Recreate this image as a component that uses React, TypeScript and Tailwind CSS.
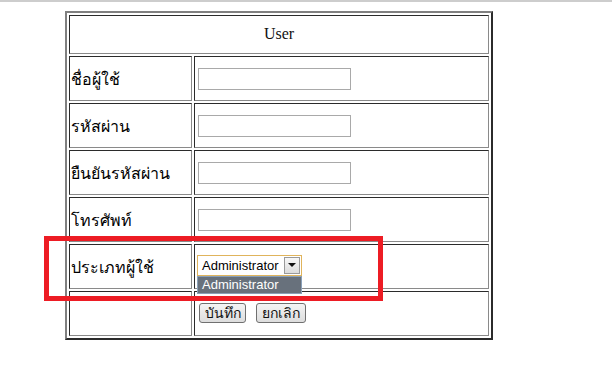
import React from 'react';

const thai = "font-['Tahoma','Noto_Sans','DejaVu_Sans',sans-serif]";

const Cell: React.FC<{ className?: string; children?: React.ReactNode }> = ({ className = '', children }) => (
  <div
    className={`border border-t-[#2b2b2b] border-l-[#2b2b2b] border-b-[#8a8a8a] border-r-[#8a8a8a] flex items-center ${className}`}
  >
    {children}
  </div>
);

const TextBox: React.FC = () => (
  <div className="ml-[3px] w-[153px] h-[22px] border border-[#a9a9a9] bg-white" />
);

const App: React.FC = () => {
  const rows = ['ชื่อผู้ใช้', 'รหัสผ่าน', 'ยืนยันรหัสผ่าน', 'โทรศัพท์'];

  return (
    <div className="relative w-[612px] h-[388px] bg-white overflow-hidden border-t-2 border-[#cdcdcd]">
      <div className="ml-[65px] mt-[9px] w-[428px] border-2 border-t-[#808080] border-l-[#808080] border-b-[#2b2b2b] border-r-[#2b2b2b] p-[2px] grid grid-cols-[123px_295px] grid-rows-[39px_repeat(6,45px)] gap-[2px]">
        <Cell className="col-span-2 justify-center">
          <span className="font-['Liberation_Serif',serif] text-[16px] text-[#111] pb-[1px]">User</span>
        </Cell>
        {rows.map((label) => (
          <React.Fragment key={label}>
            <Cell className="pl-[1px]">
              <span className={`${thai} text-[16px] text-black`}>{label}</span>
            </Cell>
            <Cell>
              <TextBox />
            </Cell>
          </React.Fragment>
        ))}
        <Cell className="pl-[1px]">
          <span className={`${thai} text-[16px] text-black`}>ประเภทผู้ใช้</span>
        </Cell>
        <Cell>
          <div className="relative ml-[2px] mb-[3px]">
            <div className="w-[105px] h-[21px] border border-[#e0b45c] bg-white flex items-center justify-between pl-[4px] pr-[1px]">
              <span className="font-['Liberation_Sans',sans-serif] text-[13px] text-black leading-none">Administrator</span>
              <span className="w-[16px] h-[17px] border border-[#9a9a9a] bg-gradient-to-b from-[#f8f8f8] to-[#dcdcdc] flex items-center justify-center">
                <svg width="8" height="4" viewBox="0 0 8 4">
                  <path d="M0 0h8L4 4z" fill="#111" />
                </svg>
              </span>
            </div>
            <div className="absolute left-0 top-[21px] w-[105px] h-[18px] bg-[#68717c] border border-[#8aa0b8] flex items-center pl-[4px]">
              <span className="font-['Liberation_Sans',sans-serif] text-[13px] text-white leading-none">Administrator</span>
            </div>
          </div>
        </Cell>
        <Cell />
        <Cell>
          <div className="ml-[4px] mt-[-1px] flex gap-[10px]">
            <button className={`${thai} w-[47px] h-[20px] rounded-[3px] border border-[#707070] bg-gradient-to-b from-[#f4f4f4] to-[#dddddd] text-[14px] text-[#111] leading-none`}>
              บันทึก
            </button>
            <button className={`${thai} w-[50px] h-[20px] rounded-[3px] border border-[#707070] bg-gradient-to-b from-[#f4f4f4] to-[#dddddd] text-[14px] text-[#111] leading-none`}>
              ยกเลิก
            </button>
          </div>
        </Cell>
      </div>
      <div className="absolute left-[44px] top-[234px] w-[339px] h-[65px] border-[5px] border-[#ed1c24]" />
    </div>
  );
};

export default App;
